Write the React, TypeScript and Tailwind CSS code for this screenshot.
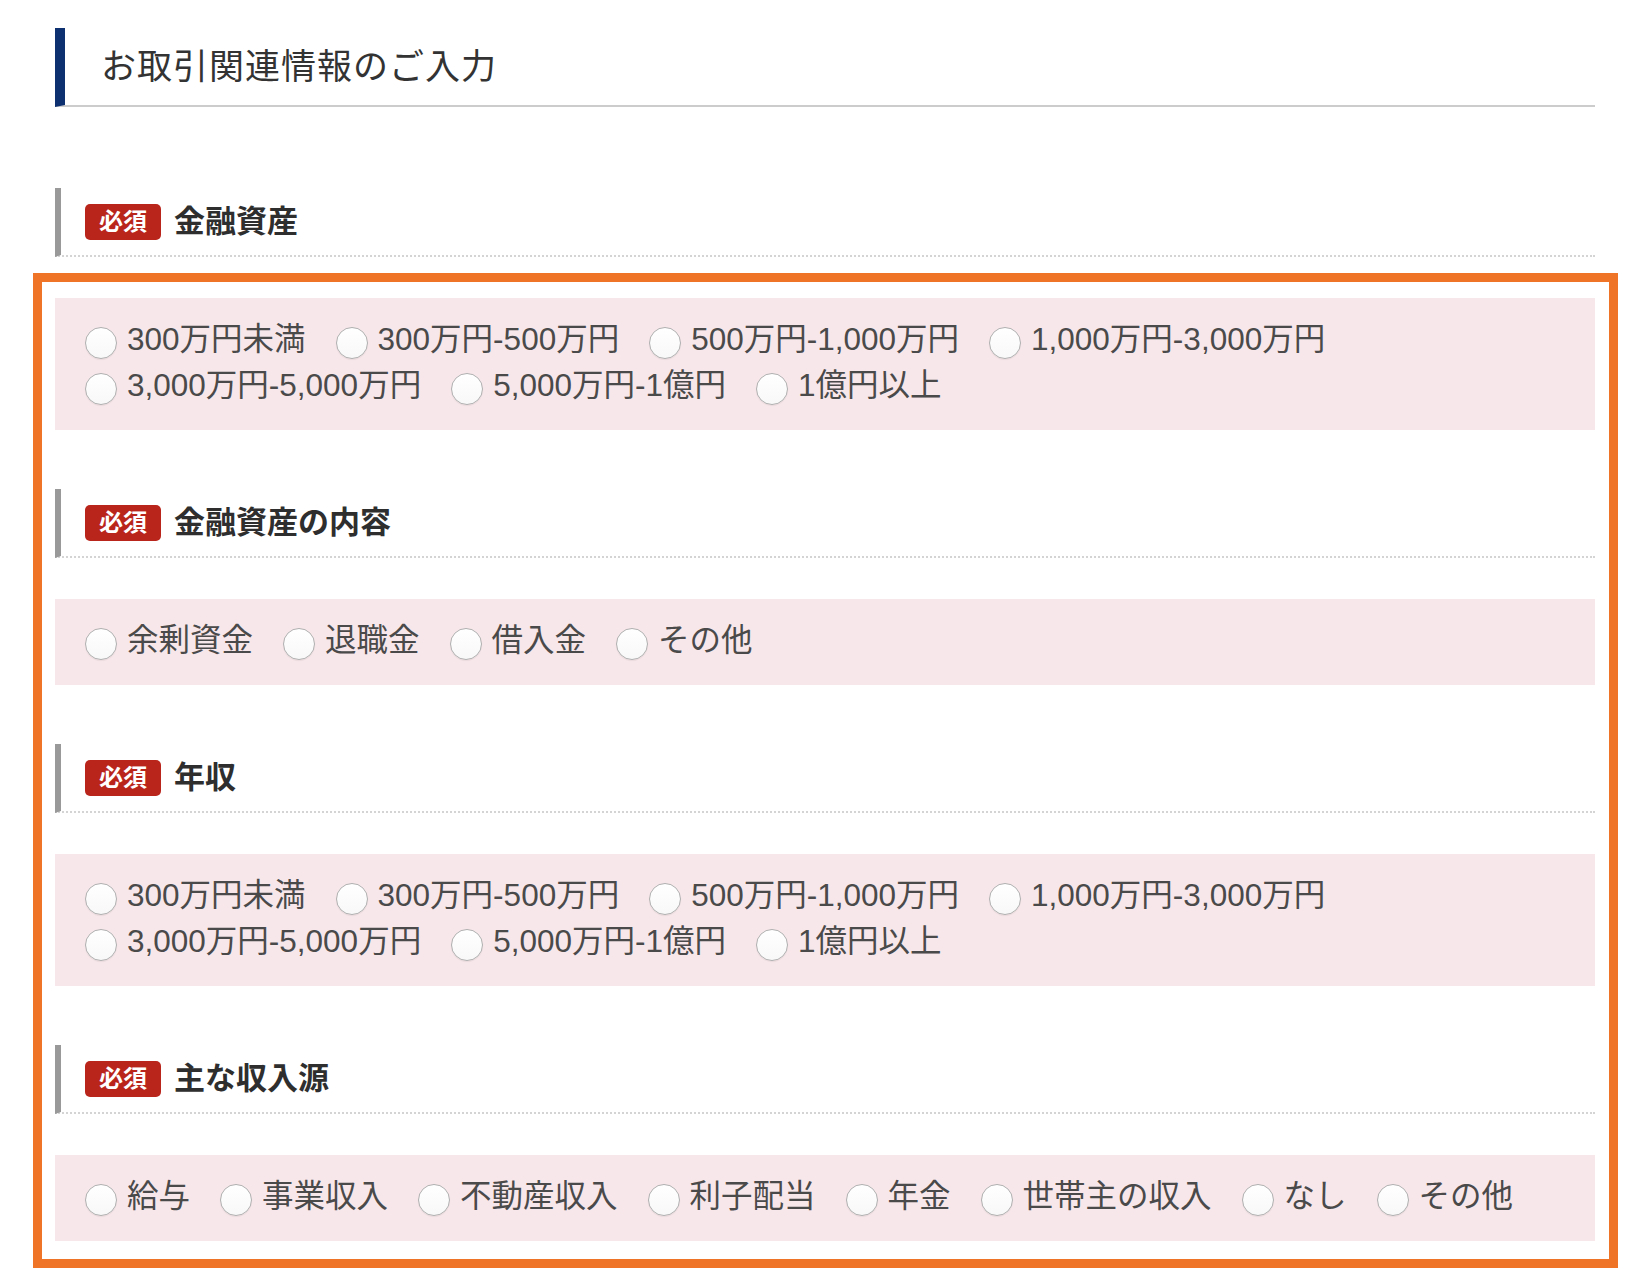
const amounts = [
  "300万円未満",
  "300万円-500万円",
  "500万円-1,000万円",
  "1,000万円-3,000万円",
  "3,000万円-5,000万円",
  "5,000万円-1億円",
  "1億円以上",
];

const sections = [
  { name: "asset_type", title: "金融資産の内容", options: ["余剰資金", "退職金", "借入金", "その他"] },
  { name: "income", title: "年収", options: amounts },
  {
    name: "income_source",
    title: "主な収入源",
    options: ["給与", "事業収入", "不動産収入", "利子配当", "年金", "世帯主の収入", "なし", "その他"],
  },
];

function Heading({ title }: { title: string }) {
  return (
    <div className="flex items-center gap-[13px] h-[69px] pl-[24px] border-l-[6px] border-l-[#999999] border-b-2 border-b-[#d4d4d4] border-dotted [border-left-style:solid]">
      <span className="flex items-center justify-center w-[76px] h-[36px] rounded-[5px] bg-[#b9241b] text-white text-[24px] font-bold leading-none">
        必須
      </span>
      <h3 className="text-[31px] font-bold text-[#2e2e2e] leading-none">{title}</h3>
    </div>
  );
}

function Options({ name, options }: { name: string; options: string[] }) {
  return (
    <div className="flex flex-wrap gap-x-[30px] bg-[#f8e7ea] pl-[30px] pr-[20px] pt-[18px] pb-[22px]">
      {options.map((o, i) => (
        <label key={i} className="flex items-center gap-[10px] leading-[46px] text-[31.5px] text-[#4a4a4a] cursor-pointer">
          <input
            type="radio"
            name={name}
            className="appearance-none shrink-0 w-[32px] h-[32px] rounded-full border border-[#b0b0b0] bg-linear-to-b from-white to-[#f8f8f8] shadow-[0_1px_1px_rgba(0,0,0,0.06)] translate-y-[4px]"
          />
          <span>{o}</span>
        </label>
      ))}
    </div>
  );
}

export default function App() {
  return (
    <div className="min-h-screen bg-white px-[55px] pt-[28px] pb-[16px] font-['Liberation_Sans','Noto_Sans_CJK_JP',sans-serif]">
      <h2 className="flex items-center h-[79px] pl-[36px] border-l-[10px] border-[#0d3170] border-b-2 border-b-[#cccccc] text-[35px] text-[#333333] leading-none tracking-[1px]">
        お取引関連情報のご入力
      </h2>

      <div className="mt-[81px]">
        <Heading title="金融資産" />
      </div>

      <div className="mt-[16px] -ml-[22px] -mr-[23px] border-[9px] border-[#ef7428] pl-[13px] pr-[14px] pt-[16px] pb-[18px]">
        <Options name="asset" options={amounts} />
        {sections.map((s) => (
          <div key={s.name}>
            <div className="mt-[59px]">
              <Heading title={s.title} />
            </div>
            <div className="mt-[41px]">
              <Options name={s.name} options={s.options} />
            </div>
          </div>
        ))}
      </div>
    </div>
  );
}
